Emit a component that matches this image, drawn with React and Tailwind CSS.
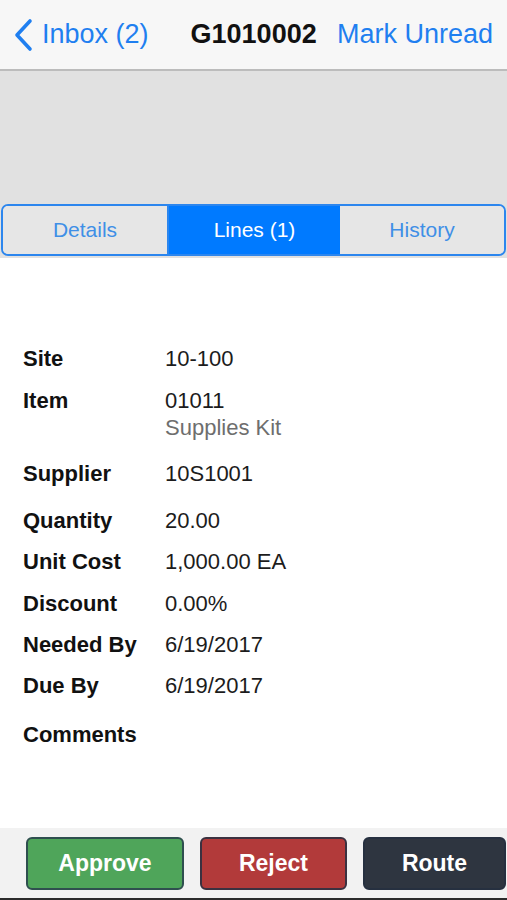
import { useState } from 'react';

const rows = [
    { label: 'Site', value: '10-100', mt: 'mt-[88px]' },
    { label: 'Item', value: '01011', sub: 'Supplies Kit', mt: 'mt-[16px]' },
    { label: 'Supplier', value: '10S1001', mt: 'mt-[20px]' },
    { label: 'Quantity', value: '20.00', mt: 'mt-[21px]' },
    { label: 'Unit Cost', value: '1,000.00 EA', mt: 'mt-[15px]' },
    { label: 'Discount', value: '0.00%', mt: 'mt-[16px]' },
    { label: 'Needed By', value: '6/19/2017', mt: 'mt-[15px]' },
    { label: 'Due By', value: '6/19/2017', mt: 'mt-[15px]' },
    { label: 'Comments', value: '', mt: 'mt-[23px]' },
];

const tabs = ['Details', 'Lines (1)', 'History'];

const App = () => {
    const [tab, setTab] = useState(1);

    return (
        <div className="w-[507px] min-h-[900px] flex flex-col bg-white font-['Liberation_Sans',Arial,sans-serif]">
            {/* Nav bar */}
            <div className="h-[71px] bg-[#f7f7f7] border-b-2 border-[#bcbcbc] flex items-center pl-[13px] pr-[14px] shrink-0">
                <button className="flex items-center text-[#1f7ff0] text-[27px] leading-none">
                    <svg width="21" height="34" viewBox="0 0 21 34" className="mr-[8px]">
                        <path d="M17 3 L4 17 L17 31" fill="none" stroke="#1f7ff0" strokeWidth="3.6" strokeLinecap="round" strokeLinejoin="round" />
                    </svg>
                    Inbox (2)
                </button>
                <div className="ml-[42px] text-[27px] font-bold text-[#111] leading-none">G1010002</div>
                <button className="ml-auto text-[#1f7ff0] text-[27px] leading-none">Mark Unread</button>
            </div>

            {/* Gray header area with segmented control */}
            <div className="h-[187px] bg-[#e1e1e1] flex flex-col justify-end pb-[2px] px-[1px] shrink-0">
                <div className="h-[52px] flex rounded-[7px] border-2 border-[#2c86ee] overflow-hidden">
                    {tabs.map((t, i) => (
                        <button
                            key={t}
                            onClick={() => setTab(i)}
                            className={
                                (i === 0 ? 'w-[166px] ' : i === 1 ? 'w-[171px] ' : 'flex-1 ') +
                                (i === 0 ? 'border-r-2 border-[#2c86ee] ' : '') +
                                (tab === i ? 'bg-[#007aff] text-white ' : 'bg-[#e6e6e6] text-[#3f8fe6] ') +
                                'text-[21px] flex items-center justify-center'
                            }
                        >
                            {t}
                        </button>
                    ))}
                </div>
            </div>

            {/* Line details */}
            <div className="flex-1 px-[23px] pb-[80px]">
                {rows.map((r) => (
                    <div key={r.label} className={'flex ' + r.mt}>
                        <div className="w-[142px] shrink-0 text-[22px] leading-[26px] font-bold text-[#111]">{r.label}</div>
                        <div className="text-[22px] leading-[26px] text-[#1c1c1c]">
                            {r.value}
                            {r.sub && <div className="mt-[1px] text-[#6e6e6e]">{r.sub}</div>}
                        </div>
                    </div>
                ))}
            </div>

            {/* Bottom actions */}
            <div className="h-[73px] bg-[#f2f2f2] border-b-[3px] border-[#2b2b2b] flex items-start pt-[9px] pl-[26px] gap-[16px] shrink-0">
                <button className="w-[158px] h-[53px] rounded-[6px] bg-[#4fa55a] border-2 border-[#2f4f4f] text-white text-[23px] font-bold">
                    Approve
                </button>
                <button className="w-[147px] h-[53px] rounded-[6px] bg-[#b23a3a] border-2 border-[#3b3140] text-white text-[23px] font-bold">
                    Reject
                </button>
                <button className="w-[143px] h-[53px] rounded-[6px] bg-[#2e3540] border-2 border-[#263040] text-white text-[23px] font-bold">
                    Route
                </button>
            </div>
        </div>
    );
};

export default App;
